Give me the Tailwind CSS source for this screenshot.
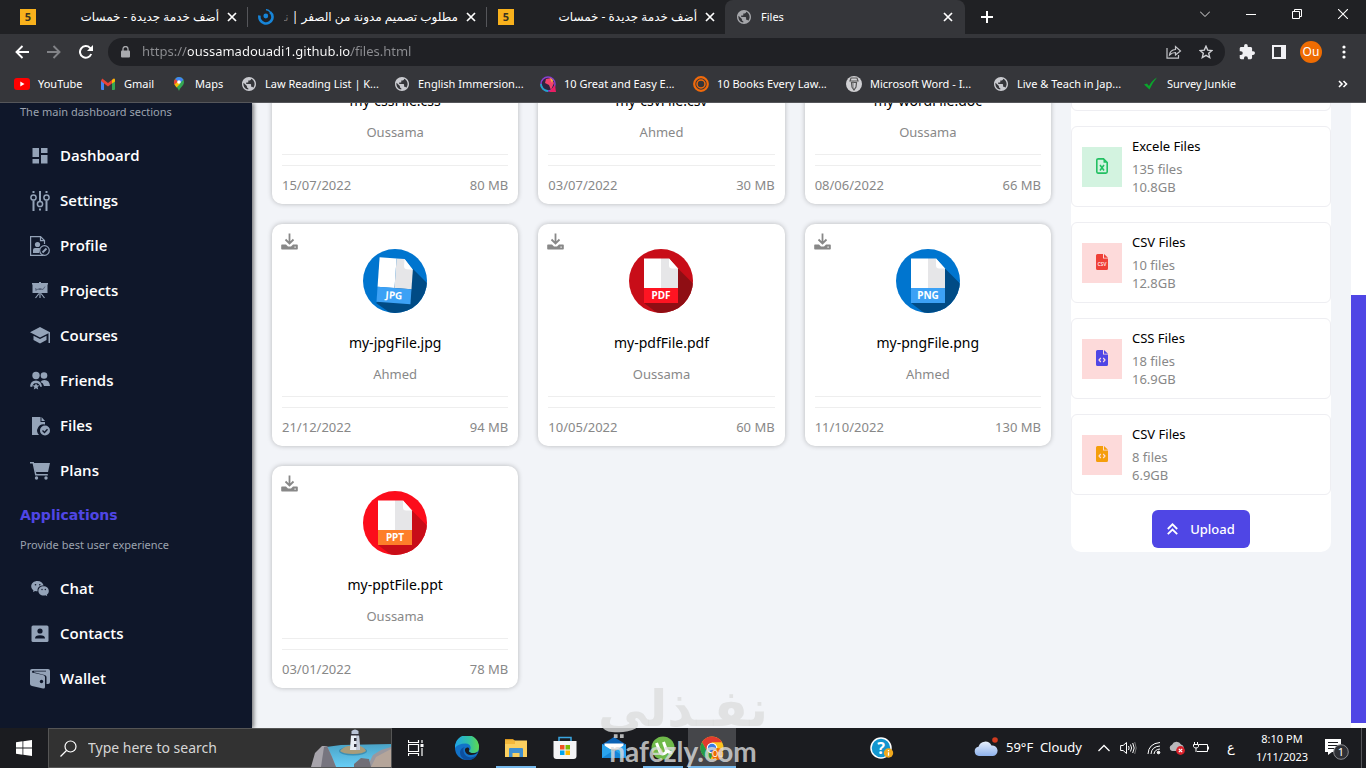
<!DOCTYPE html>
<html lang="en">
<head>
    <meta charset="UTF-8">
    <meta name="viewport" content="width=device-width, initial-scale=1.0">
    <title>Files</title>
    <script src="https://cdn.jsdelivr.net/npm/@tailwindcss/browser@4"></script>
</head>
<body class="h-screen overflow-hidden flex flex-col font-['Noto_Sans','DejaVu_Sans',sans-serif] bg-[#f2f4f8]">
    <!-- Shared icons -->
    <svg class="hidden">
        <symbol id="globe" viewBox="2 2 20 20"><path fill="currentColor" d="M12 2C6.48 2 2 6.48 2 12s4.48 10 10 10 10-4.48 10-10S17.52 2 12 2zm-1 17.93c-3.95-.49-7-3.85-7-7.93 0-.62.08-1.21.21-1.79L9 15v1c0 1.1.9 2 2 2v1.93zm6.9-2.54c-.26-.81-1-1.39-1.9-1.39h-1v-3c0-.55-.45-1-1-1H8v-2h2c.55 0 1-.45 1-1V7h2c1.1 0 2-.9 2-2v-.41c2.93 1.19 5 4.06 5 7.41 0 2.08-.8 3.97-2.1 5.39z"/></symbol>
        <symbol id="close" viewBox="0 0 10 10"><path d="M1 1l8 8M9 1L1 9" fill="none" stroke="currentColor" stroke-width="1.7"/></symbol>
        <symbol id="download" viewBox="0 0 17 17"><path d="M8.500 0.500v9M4.500 6.500l4 4 4-4" fill="none" stroke="currentColor" stroke-width="1.8"/><path fill="currentColor" fill-rule="evenodd" d="M1 11.500h4l2 2h3l2-2h4q.8 0 .8.800v3.400q0 .8-.8.800H1q-.8 0-.8-.800v-3.400q0-.8.8-.800zM13.500 13.500v1.200h1.200v-1.200z"/></symbol>
        <symbol id="page" viewBox="0 0 64 64">
            <path fill="#fff" d="M15 9.500h17V39H15z"/>
            <path fill="#e6e6e8" d="M32 9.500h8l9 10V39H32z"/>
            <path fill="#fff" d="M40 9.500l9 10h-6q-3 0-3-3z"/>
        </symbol>
        <symbol id="code-file" viewBox="0 0 12 16"><path fill="currentColor" d="M1.500 0H7v4.500h5v10q0 1.500-1.500 1.500h-9Q0 16 0 14.500v-13Q0 0 1.500 0zM8 0l4 3.700H8z"/><path d="M4.800 8L3 10l1.800 2M7.200 8L9 10l-1.800 2" fill="none" stroke="#fddcdc" stroke-width="1.200"/></symbol>
    </svg>

    <!-- Browser tabs -->
    <header class="shrink-0 bg-[#202124] text-white text-xs">
        <div class="flex h-[34px] pl-2">
            <div class="flex w-[240px] shrink-0 items-center pl-3">
                <span class="flex h-4 w-4 items-center justify-center bg-[#f8b11c] text-[11px] font-bold text-[#3a3320]">5</span>
                <span dir="rtl" class="flex-1 pr-2 text-right whitespace-nowrap overflow-hidden ml-3">أضف خدمة جديدة - خمسات</span>
                <button aria-label="Close tab" class="mr-2.5"><svg class="h-2.5 w-2.5"><use href="#close"/></svg></button>
                <span class="h-5 w-px bg-[#55565a]"></span>
            </div>
            <div class="flex w-[239px] shrink-0 items-center pl-2.5">
                <svg class="h-4 w-4" viewBox="0 0 16 16"><path d="M1.500 6.500A6.600 6.600 0 0 0 14.200 10 6.600 6.600 0 0 0 12 3" fill="none" stroke="#1785d8" stroke-width="2.600"/><path d="M8 .8A4 4 0 0 1 12 3" fill="none" stroke="#1785d8" stroke-width="1.500"/><circle cx="7.800" cy="7" r="2.400" fill="#1785d8"/></svg>
                <span dir="rtl" class="flex-1 pr-2 text-right whitespace-nowrap overflow-hidden ml-2.5">مطلوب تصميم مدونة من الصفر | <span class="text-[#6b6c70]">نـ</span></span>
                <button aria-label="Close tab" class="mr-2.5"><svg class="h-2.5 w-2.5"><use href="#close"/></svg></button>
                <span class="h-5 w-px bg-[#55565a]"></span>
            </div>
            <div class="flex w-[238px] shrink-0 items-center pl-[11px]">
                <span class="flex h-4 w-4 items-center justify-center bg-[#f8b11c] text-[11px] font-bold text-[#3a3320]">5</span>
                <span dir="rtl" class="flex-1 pr-2 text-right whitespace-nowrap overflow-hidden ml-3">أضف خدمة جديدة - خمسات</span>
                <button aria-label="Close tab" class="mr-2.5"><svg class="h-2.5 w-2.5"><use href="#close"/></svg></button>
            </div>
            <div class="flex w-[240px] shrink-0 items-center rounded-t-lg bg-[#35363a] px-3">
                <svg class="h-3.5 w-3.5 text-[#a5a6aa]"><use href="#globe"/></svg>
                <span class="ml-2.5 flex-1 text-[11px]">Files</span>
                <button aria-label="Close tab"><svg class="h-2.5 w-2.5"><use href="#close"/></svg></button>
            </div>
            <button aria-label="New tab" class="ml-4"><svg class="h-3 w-3" viewBox="0 0 12 12"><path d="M6 0v12M0 6h12" stroke="#fff" stroke-width="2"/></svg></button>
            <div class="ml-auto flex h-7">
                <button aria-label="Search tabs" class="flex w-[46px] items-center justify-center"><svg class="h-1.5 w-2.5" viewBox="0 0 10 6"><path d="M0 .5l5 5 5-5" fill="none" stroke="#ddd"/></svg></button>
                <button aria-label="Minimize" class="flex w-[46px] items-center justify-center"><span class="h-px w-2.5 bg-white"></span></button>
                <button aria-label="Restore" class="flex w-[46px] items-center justify-center"><svg class="h-2.5 w-2.5" viewBox="0 0 10 10"><path d="M.5 2.500h7v7h-7zM2.500 2V.5h7v7H8" fill="none" stroke="#fff"/></svg></button>
                <button aria-label="Close window" class="flex w-[46px] items-center justify-center"><svg class="h-2.5 w-2.5" viewBox="0 0 10 10"><path d="M0 0l10 10M10 0L0 10" stroke="#fff" stroke-width="1.100"/></svg></button>
            </div>
        </div>

        <!-- Toolbar -->
        <div class="flex h-9 items-center bg-[#35363a] pl-[15px] pr-5">
            <button aria-label="Back"><svg class="h-3.5 w-3.5" viewBox="0 0 14 14"><path d="M14 7H1.500M7.500 1L1.500 7l6 6" fill="none" stroke="#fff" stroke-width="1.900"/></svg></button>
            <button aria-label="Forward" class="ml-[18px]"><svg class="h-3.5 w-3.5" viewBox="0 0 14 14"><path d="M0 7h12.500M6.500 1l6 6-6 6" fill="none" stroke="#828387" stroke-width="1.900"/></svg></button>
            <button aria-label="Reload" class="ml-[18px]"><svg class="h-3.5 w-3.5" viewBox="0 0 14 14"><path d="M12.200 9A5.800 5.800 0 1 1 11 2.900L12.500 4.500" fill="none" stroke="#fff" stroke-width="2"/><path fill="#fff" d="M14 0v6H8z"/></svg></button>
            <div class="ml-[15px] flex h-7 flex-1 items-center rounded-full bg-[#202125] pl-[13px] pr-3">
                <svg class="h-3 w-[9px]" viewBox="0 0 9 12"><path d="M2 5V3a2.500 2.500 0 0 1 5 0v2" fill="none" stroke="#a9aaae" stroke-width="1.300"/><rect y="4.500" width="9" height="7" rx="1" fill="#a9aaae"/></svg>
                <input aria-label="Address" type="text" value="https://oussamadouadi1.github.io/files.html" class="ml-3 flex-1 bg-[linear-gradient(to_right,#8d8e92_46px,#fff_46px,#fff_209px,#8d8e92_209px)] bg-clip-text text-[13px] text-transparent outline-none">
                <button aria-label="Share"><svg class="h-3.5 w-4" viewBox="0 0 16 14"><path d="M1 3v10.200h11.500V10M3.500 10q.5-5 6-5.500V1.500L14.500 6 9.500 10V7.500Q6 7.500 3.500 10z" fill="none" stroke="#c4c5c9" stroke-width="1.200"/></svg></button>
                <button aria-label="Bookmark this page" class="ml-[17px]"><svg class="h-3.5 w-3.5" viewBox="0 0 14 14"><path d="M7 1.200l1.700 3.900 4.200.400-3.200 2.800 1 4.200L7 10.300l-3.700 2.200 1-4.200L1.100 5.500l4.200-.400z" fill="none" stroke="#d0d1d5" stroke-width="1.400"/></svg></button>
            </div>
            <button aria-label="Extensions" class="ml-3.5"><svg class="h-4 w-4" viewBox="1 1 22 22"><path fill="#f1f1f4" d="M20.500 11H19V7c0-1.100-.9-2-2-2h-4V3.500a2.500 2.500 0 0 0-5 0V5H4c-1.100 0-2 .9-2 2v3.800h1.500a2.700 2.700 0 0 1 0 5.400H2V20c0 1.100.9 2 2 2h3.800v-1.500a2.700 2.700 0 0 1 5.400 0V22H17c1.100 0 2-.9 2-2v-4h1.500a2.500 2.500 0 0 0 0-5z"/></svg></button>
            <button aria-label="Side panel" class="ml-[17px]"><svg class="h-3.5 w-3.5" viewBox="0 0 14 14"><path d="M1 1h12v12H1z" fill="none" stroke="#f1f1f4" stroke-width="2"/><path d="M9 0h5v14H9z" fill="#f1f1f4"/></svg></button>
            <button class="ml-3.5 h-[22px] w-[22px] rounded-full bg-[#ee6c02]">Ou</button>
            <button aria-label="Menu" class="ml-5"><svg class="h-3.5 w-1" viewBox="0 0 4 14"><g fill="#fff"><circle cx="2" cy="2" r="1.600"/><circle cx="2" cy="7" r="1.600"/><circle cx="2" cy="12" r="1.600"/></g></svg></button>
        </div>

        <!-- Bookmarks -->
        <nav class="flex h-[33px] items-center border-b border-[#55565a] bg-[#35363a] pb-1 pl-3.5 text-[11px] whitespace-nowrap">
            <a href="#" class="flex w-[86px] shrink-0 items-center gap-2">
                <svg class="h-4 w-4" viewBox="0 0 16 16"><rect y="2" width="16" height="12" rx="3" fill="#f00"/><path fill="#fff" d="M6.300 5.500v5l4.200-2.500z"/></svg>YouTube</a>
            <a href="#" class="flex w-[71px] shrink-0 items-center gap-2">
                <svg class="h-4 w-4" viewBox="0 0 16 16"><path fill="#4285f4" d="M1 4.500l3 2V14H2q-1 0-1-1z"/><path fill="#34a853" d="M15 4.500l-3 2V14h2q1 0 1-1z"/><path fill="#ea4335" d="M2.200 2.500L8 7l5.800-4.500L15 5 8 10.500 1 5z"/><path fill="#fbbc04" d="M12 4l2-1.600q1-.2 1 1.600v1.500l-3 2z"/></svg>Gmail</a>
            <a href="#" class="flex w-[70px] shrink-0 items-center gap-2">
                <svg class="h-4 w-4" viewBox="0 0 16 16"><path fill="#34a853" d="M8 1a5 5 0 0 1 5 5c0 4-4 5-5 9-1-4-5-5-5-9a5 5 0 0 1 5-5z"/><path fill="#4285f4" d="M8 1a5 5 0 0 1 4.500 2.800L7 9 4.200 3A5 5 0 0 1 8 1z"/><path fill="#ea4335" d="M4.200 3L7 5.500 3.800 9A5 5 0 0 1 4.200 3z"/><path fill="#fbbc04" d="M3.500 8.500L7 5.500 9 8l-3.500 3.500z"/><circle cx="8" cy="6" r="1.800" fill="#fff"/></svg>Maps</a>
            <a href="#" class="flex w-[153px] shrink-0 items-center gap-2"><svg class="h-3.5 w-4 text-[#c9cacf]"><use href="#globe"/></svg>Law Reading List | K...</a>
            <a href="#" class="flex w-[146px] shrink-0 items-center gap-2"><svg class="h-3.5 w-4 text-[#c9cacf]"><use href="#globe"/></svg>English Immersion...</a>
            <a href="#" class="flex w-[153px] shrink-0 items-center gap-2">
                <svg class="h-4 w-4" viewBox="0 0 16 16"><circle cx="8" cy="8" r="7" fill="#2d2440" stroke="#8a3fd0" stroke-width="1.500"/><path d="M8 15A7 7 0 0 1 1 8" fill="none" stroke="#1ea7c9" stroke-width="1.800"/><path d="M15 9l1 7H9z" fill="#e91e63"/><path d="M6 3l5-1 3 5-3 7-2-5-4-2z" fill="#f0436c"/><path d="M10 2l3 2-1 3z" fill="#f6b73c"/></svg>10 Great and Easy E...</a>
            <a href="#" class="flex w-[153px] shrink-0 items-center gap-2">
                <svg class="h-4 w-4" viewBox="0 0 16 16"><g fill="none" stroke="#f26a0a"><circle cx="8" cy="8" r="6.800" stroke-width="2.200"/><circle cx="8" cy="8" r="4" stroke-width="1.500"/></g></svg>10 Books Every Law...</a>
            <a href="#" class="flex w-[147px] shrink-0 items-center gap-2">
                <svg class="h-4 w-4" viewBox="0 0 16 16"><circle cx="8" cy="8" r="8" fill="#d0d0d3"/><path d="M5 2h6l1 3H4zM5.500 6.500h5L10 11l-2 3-2-3z" fill="none" stroke="#555" stroke-width="1.200"/><path d="M7 5v8" stroke="#777"/></svg>Microsoft Word - I...</a>
            <a href="#" class="flex w-[150px] shrink-0 items-center gap-2"><svg class="h-3.5 w-4 text-[#c9cacf]"><use href="#globe"/></svg>Live &amp; Teach in Jap...</a>
            <a href="#" class="flex items-center gap-2">
                <svg class="h-4 w-4" viewBox="0 0 16 16"><path fill="#0aa52c" d="M1 8.500l3-1 2 2.500Q9 4 14 1.500 10 6 6.500 13.500z"/></svg>Survey Junkie</a>
            <button aria-label="More bookmarks" class="ml-auto mr-[18px]"><svg class="h-2 w-2.5" viewBox="0 0 10 8"><path d="M1 1l3 3-3 3M5.500 1l3 3-3 3" fill="none" stroke="#fff" stroke-width="1.600"/></svg></button>
        </nav>
    </header>

    <div class="flex min-h-0 flex-1 overflow-hidden">
        <!-- Sidebar -->
        <aside class="z-10 flex w-[252px] shrink-0 flex-col justify-end bg-[#0f172a] pb-[27px] shadow-[2px_0_4px_rgba(0,0,0,0.5)]">
            <p class="mb-[13px] pl-5 text-[11px] leading-4 text-[#9ca3af]">The main dashboard sections</p>
            <nav class="mb-3 font-['Open_Sans',sans-serif] text-[15px] font-semibold text-white">
                <a href="#" class="flex h-[45px] items-center gap-2.5 pl-[30px]">
                    <svg class="h-5 w-5 text-[#94a3b8]" viewBox="0 0 20 20" fill="currentColor"><path d="M2.500 2h6.500v9H2.500zM11 2h6.500v5H11zM2.500 13h6.500v4.500H2.500zM11 9h6.500v8.500H11z"/></svg>Dashboard</a>
                <a href="#" class="flex h-[45px] items-center gap-2.5 pl-[30px]">
                    <svg class="h-5 w-5 text-[#94a3b8]" viewBox="0 0 20 20" fill="none" stroke="currentColor" stroke-width="1.500"><circle cx="3.500" cy="6.500" r="2.600"/><circle cx="10" cy="13" r="2.600"/><circle cx="16.500" cy="6.500" r="2.600"/><path stroke-width="2" d="M3.500 9.500V20M16.500 9.500V20M10 0v10M3.500 0v2M16.500 0v2M10 17.500v2"/></svg>Settings</a>
                <a href="#" class="flex h-[45px] items-center gap-2.5 pl-[30px]">
                    <svg class="h-5 w-5 text-[#94a3b8]" viewBox="0 0 20 20" fill="none" stroke="currentColor" stroke-width="1.200"><path d="M14.500 8V4.500L10.500.6H.6v18.800h13"/><path d="M10.500.6v4h4"/><circle cx="7.500" cy="8.500" r="2.600" fill="currentColor" stroke="none"/><path d="M3 17v-3q0-2 2-2h5l-1 5z" fill="currentColor" stroke="none"/><circle cx="14.500" cy="14.500" r="4.800"/><path d="M12.500 16.500l4-4" stroke-width="2"/></svg>Profile</a>
                <a href="#" class="flex h-[45px] items-center gap-2.5 pl-[30px]">
                    <svg class="h-5 w-5 text-[#94a3b8]" viewBox="0 0 20 20"><path fill="currentColor" d="M2 2h7V1h2v1h7v1.500h-.500V12H2.500V3.500H2z"/><path d="M5 9h2M8.500 8.500h3M5 7.500l2 1 3-1 3 1 2-3" fill="none" stroke="#46536b" stroke-width=".8"/><path d="M10 12v5M9 12.500l-3.500 4.500M11 12.500l3.500 4.500" stroke="currentColor" stroke-width="1.200"/></svg>Projects</a>
                <a href="#" class="flex h-[45px] items-center gap-2.5 pl-[30px]">
                    <svg class="h-5 w-5 text-[#94a3b8]" viewBox="0 0 20 20" fill="currentColor"><path d="M10 1l10 5.200V17h-1.500V7.200L10 11.500 0 6.200z"/><path d="M3.500 9.800l6.500 3.300 6.500-3.300V14L10 17.500 3.500 14z"/></svg>Courses</a>
                <a href="#" class="flex h-[45px] items-center gap-2.5 pl-[30px]">
                    <svg class="h-5 w-5 text-[#94a3b8]" viewBox="0 0 20 20" fill="currentColor"><circle cx="6" cy="4.500" r="3.700"/><circle cx="14" cy="4.500" r="3.300"/><path d="M10.500 11q1-2 4-2 5 0 5.500 6h-6q-.5-3-3.500-4zM0 15.500q.5-6 6-6 5 0 6 6l-1.500.5q-1.500-4-4.500-4T2.200 16z"/><path d="M6 12l1 2.200 2.500.2-1.900 1.700.600 2.400L6 17.200l-2.200 1.300.600-2.400-1.900-1.700 2.500-.2z"/></svg>Friends</a>
                <a href="#" class="flex h-[45px] items-center gap-2.5 pl-[30px]">
                    <svg class="h-5 w-5 text-[#94a3b8]" viewBox="0 0 20 20"><path fill="currentColor" d="M2 1h8.500v5H15v2.500a6.300 6.300 0 0 0-6 10.500H2zM11.500 1L15 5h-3.500z"/><circle cx="15" cy="14.500" r="5" fill="currentColor"/><path d="M12.500 14.500l2 2 3-3.200" fill="none" stroke="#0f172a" stroke-width="1.400"/></svg>Files</a>
                <a href="#" class="flex h-[45px] items-center gap-2.5 pl-[30px]">
                    <svg class="h-5 w-5 text-[#94a3b8]" viewBox="0 0 20 20"><path fill="currentColor" d="M3.200 2H20l-2 9H5.500z"/><path d="M0 1.700h3.200l2.600 12h12" fill="none" stroke="currentColor" stroke-width="1.500"/><circle cx="6.500" cy="17" r="1.700" fill="currentColor"/><circle cx="16" cy="17" r="1.700" fill="currentColor"/></svg>Plans</a>
            </nav>
            <h2 class="mb-3 pl-5 font-['DejaVu_Sans',sans-serif] text-sm font-bold leading-5 text-[#4f46e5]">Applications</h2>
            <p class="mb-[13px] pl-5 text-[11px] leading-4 text-[#9ca3af]">Provide best user experience</p>
            <nav class="font-['Open_Sans',sans-serif] text-[15px] font-semibold text-white">
                <a href="#" class="flex h-[45px] items-center gap-2.5 pl-[30px]">
                    <svg class="h-5 w-5 text-[#94a3b8]" viewBox="0 0 20 20"><path fill="currentColor" d="M7.500 2C4 2 1.200 4.200 1.200 7.300c0 1.700.9 3 2.200 4L3 13l2.200-1q1.300.3 2.400.2C7 8.500 10 6.300 13.600 6.500 13 3.800 10.500 2 7.500 2z"/><path fill="currentColor" d="M13.600 7.300c-3 0-5.200 2-5.200 4.600s2.200 4.600 5.200 4.600q1 0 1.800-.3l1.900 1-.5-1.500c1.200-.8 2-2.200 2-3.800 0-2.600-2.300-4.600-5.200-4.600z"/><g fill="#0f172a"><circle cx="5.500" cy="5.700" r=".8"/><circle cx="9.800" cy="5.700" r=".8"/><circle cx="12" cy="10.500" r=".7"/><circle cx="15.300" cy="10.500" r=".7"/></g></svg>Chat</a>
                <a href="#" class="flex h-[45px] items-center gap-2.5 pl-[30px]">
                    <svg class="h-5 w-5 text-[#94a3b8]" viewBox="0 0 20 20"><rect x="1.500" y="1.500" width="17" height="16.500" rx="1.500" fill="currentColor"/><circle cx="10" cy="7" r="2.600" fill="#0f172a"/><path fill="#0f172a" d="M5 14.500q0-3.300 5-3.300t5 3.300z"/></svg>Contacts</a>
                <a href="#" class="flex h-[45px] items-center gap-2.5 pl-[30px]">
                    <svg class="h-5 w-5 text-[#94a3b8]" viewBox="0 0 20 20"><path fill="currentColor" d="M2 0h16q2 0 2 2v11q0 2-2 2h-1.500V8q0-1.500-2-2L4 3.200V2.500h12V1.700H3Q1.700 2 2 3.500L13 6q2 .5 2 2v10q0 2-2 1.500L2 17q-2-.5-2-2V2q0-2 2-2z"/><circle cx="11.500" cy="12.500" r="1.700" fill="#0f172a"/></svg>Wallet</a>
            </nav>
        </aside>

        <!-- Files -->
        <main class="flex min-w-0 flex-1 flex-col justify-end bg-[#f2f4f8] px-5 pb-10">
            <div class="flex items-start gap-5">
                <section class="grid flex-1 grid-cols-3 gap-5 text-center text-[13px] leading-5 text-[#888]">
                    <article class="rounded-[10px] bg-white px-2.5 pt-[25px] pb-[9px] shadow-[0_0_5px_rgba(0,0,0,0.25)]">
                        <div class="h-16"></div>
                        <h3 class="mt-5 text-sm leading-5 text-black">my-cssFile.css</h3>
                        <p class="mt-[11px]">Oussama</p>
                        <div class="mt-3 h-3 border-y border-[#eee]"></div>
                        <div class="mt-[9px] flex justify-between"><span>15/07/2022</span><span>80 MB</span></div>
                    </article>
                    <article class="rounded-[10px] bg-white px-2.5 pt-[25px] pb-[9px] shadow-[0_0_5px_rgba(0,0,0,0.25)]">
                        <div class="h-16"></div>
                        <h3 class="mt-5 text-sm leading-5 text-black">my-csvFile.csv</h3>
                        <p class="mt-[11px]">Ahmed</p>
                        <div class="mt-3 h-3 border-y border-[#eee]"></div>
                        <div class="mt-[9px] flex justify-between"><span>03/07/2022</span><span>30 MB</span></div>
                    </article>
                    <article class="rounded-[10px] bg-white px-2.5 pt-[25px] pb-[9px] shadow-[0_0_5px_rgba(0,0,0,0.25)]">
                        <div class="h-16"></div>
                        <h3 class="mt-5 text-sm leading-5 text-black">my-wordFile.doc</h3>
                        <p class="mt-[11px]">Oussama</p>
                        <div class="mt-3 h-3 border-y border-[#eee]"></div>
                        <div class="mt-[9px] flex justify-between"><span>08/06/2022</span><span>66 MB</span></div>
                    </article>

                    <article class="relative rounded-[10px] bg-white px-2.5 pt-[25px] pb-[9px] shadow-[0_0_5px_rgba(0,0,0,0.25)]">
                        <button aria-label="Download" class="absolute left-[9px] top-[9px]"><svg class="h-[17px] w-[17px]"><use href="#download"/></svg></button>
                        <svg class="mx-auto h-16 w-16 rounded-full" viewBox="0 0 64 64">
                            <path fill="#0075cf" d="M0 0h64v64H0z"/><path fill="#004b85" d="M50 20l30 30-30 30-37-26z"/>
                            <g transform="rotate(4 32 32)"><use href="#page" width="64" height="64"/><path fill="#3ca1f5" d="M15 39h34v15H15z"/><text x="32" y="50" text-anchor="middle" font-size="10" font-weight="700" fill="#fff">JPG</text></g>
                        </svg>
                        <h3 class="mt-5 text-sm leading-5 text-black">my-jpgFile.jpg</h3>
                        <p class="mt-[11px]">Ahmed</p>
                        <div class="mt-3 h-3 border-y border-[#eee]"></div>
                        <div class="mt-[9px] flex justify-between"><span>21/12/2022</span><span>94 MB</span></div>
                    </article>
                    <article class="relative rounded-[10px] bg-white px-2.5 pt-[25px] pb-[9px] shadow-[0_0_5px_rgba(0,0,0,0.25)]">
                        <button aria-label="Download" class="absolute left-[9px] top-[9px]"><svg class="h-[17px] w-[17px]"><use href="#download"/></svg></button>
                        <svg class="mx-auto h-16 w-16 rounded-full" viewBox="0 0 64 64">
                            <path fill="#c80d18" d="M0 0h64v64H0z"/><path fill="#8f0e14" d="M49 19.500l31 31-30 30-35-26.500z"/>
                            <use href="#page" width="64" height="64"/><path fill="#ff1422" d="M15 39h34v15H15z"/><text x="32" y="50" text-anchor="middle" font-size="10" font-weight="700" fill="#fff">PDF</text>
                        </svg>
                        <h3 class="mt-5 text-sm leading-5 text-black">my-pdfFile.pdf</h3>
                        <p class="mt-[11px]">Oussama</p>
                        <div class="mt-3 h-3 border-y border-[#eee]"></div>
                        <div class="mt-[9px] flex justify-between"><span>10/05/2022</span><span>60 MB</span></div>
                    </article>
                    <article class="relative rounded-[10px] bg-white px-2.5 pt-[25px] pb-[9px] shadow-[0_0_5px_rgba(0,0,0,0.25)]">
                        <button aria-label="Download" class="absolute left-[9px] top-[9px]"><svg class="h-[17px] w-[17px]"><use href="#download"/></svg></button>
                        <svg class="mx-auto h-16 w-16 rounded-full" viewBox="0 0 64 64">
                            <path fill="#0075cf" d="M0 0h64v64H0z"/><path fill="#004b85" d="M49 19.500l31 31-30 30-35-26.500z"/>
                            <use href="#page" width="64" height="64"/><path fill="#3ca1f5" d="M15 39h34v15H15z"/><text x="32" y="50" text-anchor="middle" font-size="10" font-weight="700" fill="#fff">PNG</text>
                        </svg>
                        <h3 class="mt-5 text-sm leading-5 text-black">my-pngFile.png</h3>
                        <p class="mt-[11px]">Ahmed</p>
                        <div class="mt-3 h-3 border-y border-[#eee]"></div>
                        <div class="mt-[9px] flex justify-between"><span>11/10/2022</span><span>130 MB</span></div>
                    </article>

                    <article class="relative rounded-[10px] bg-white px-2.5 pt-[25px] pb-[9px] shadow-[0_0_5px_rgba(0,0,0,0.25)]">
                        <button aria-label="Download" class="absolute left-[9px] top-[9px]"><svg class="h-[17px] w-[17px]"><use href="#download"/></svg></button>
                        <svg class="mx-auto h-16 w-16 rounded-full" viewBox="0 0 64 64">
                            <path fill="#fc0d1b" d="M0 0h64v64H0z"/><path fill="#c80d18" d="M49 19.500l31 31-30 30-35-26.500z"/>
                            <use href="#page" width="64" height="64"/><path fill="#fd7e2a" d="M15 39h34v15H15z"/><text x="32" y="50" text-anchor="middle" font-size="10" font-weight="700" fill="#fff">PPT</text>
                        </svg>
                        <h3 class="mt-5 text-sm leading-5 text-black">my-pptFile.ppt</h3>
                        <p class="mt-[11px]">Oussama</p>
                        <div class="mt-3 h-3 border-y border-[#eee]"></div>
                        <div class="mt-[9px] flex justify-between"><span>03/01/2022</span><span>78 MB</span></div>
                    </article>
                </section>

                <!-- File statistics -->
                <section class="flex w-[260px] shrink-0 flex-col gap-[15px] rounded-[10px] bg-white pt-12 pb-1 text-[13px] leading-[18px] text-[#888]">
                    <div class="h-[81px] rounded-md border border-[#eeeef2]"></div>
                    <div class="flex items-center gap-2.5 rounded-md border border-[#eeeef2] px-2.5 py-2.5">
                        <span class="flex h-10 w-10 items-center justify-center bg-[#d3f3e0] pb-0.5 text-[#22c062]">
                            <svg class="h-4 w-3" viewBox="0 0 12 16"><path d="M1.500.9h6L11.200 4.500v9.300q0 1.300-1.300 1.300H2q-1.200 0-1.200-1.300V2Q.8.900 2 .9z" fill="none" stroke="currentColor" stroke-width="1.600"/><path d="M7.500 1v3.800h3.700z" fill="currentColor"/><path d="M4 7l4 5.500M8 7l-4 5.500" stroke="currentColor" stroke-width="1.600"/></svg>
                        </span>
                        <div><h4 class="mb-[5px] text-black">Excele Files</h4><p>135 files</p><p>10.8GB</p></div>
                    </div>
                    <div class="flex items-center gap-2.5 rounded-md border border-[#eeeef2] px-2.5 py-2.5">
                        <span class="flex h-10 w-10 items-center justify-center bg-[#fddada] pb-0.5 text-[#ef4037]">
                            <svg class="h-4 w-3" viewBox="0 0 12 16"><path fill="currentColor" d="M1.500 0H7v4.500h5v10q0 1.500-1.500 1.500h-9Q0 16 0 14.500v-13Q0 0 1.500 0zM8 0l4 3.700H8z"/><text x="6" y="12" text-anchor="middle" font-size="5" font-weight="700" fill="#fddada">CSV</text></svg>
                        </span>
                        <div><h4 class="mb-[5px] text-black">CSV Files</h4><p>10 files</p><p>12.8GB</p></div>
                    </div>
                    <div class="flex items-center gap-2.5 rounded-md border border-[#eeeef2] px-2.5 py-2.5">
                        <span class="flex h-10 w-10 items-center justify-center bg-[#fddada] pb-0.5 text-[#4f46e5]"><svg class="h-4 w-3"><use href="#code-file"/></svg></span>
                        <div><h4 class="mb-[5px] text-black">CSS Files</h4><p>18 files</p><p>16.9GB</p></div>
                    </div>
                    <div class="flex items-center gap-2.5 rounded-md border border-[#eeeef2] px-2.5 py-2.5">
                        <span class="flex h-10 w-10 items-center justify-center bg-[#fddada] pb-0.5 text-[#f59e0b]"><svg class="h-4 w-3"><use href="#code-file"/></svg></span>
                        <div><h4 class="mb-[5px] text-black">CSV Files</h4><p>8 files</p><p>6.9GB</p></div>
                    </div>
                    <button class="mx-auto flex h-[38px] items-center gap-3 rounded-md bg-[#4f46e5] px-[15px] font-medium text-white">
                        <svg class="h-3 w-[11px]" viewBox="0 0 11 12"><path d="M.8 6l4.700-4.700L10.200 6M.8 11.200l4.700-4.700 4.700 4.700" fill="none" stroke="#fff" stroke-width="1.800"/></svg>Upload</button>
                </section>
            </div>
        </main>

        <!-- Scrollbar -->
        <div class="flex w-[15px] shrink-0 flex-col justify-end bg-white pb-[5px]">
            <div class="h-[69%] bg-[#4f46e5]"></div>
        </div>
    </div>

    <!-- Taskbar -->
    <footer class="relative flex h-10 shrink-0 bg-[#1b1c20] text-white">
        <button aria-label="Start" class="flex w-12 items-center justify-center"><svg class="h-4 w-4" viewBox="0 0 16 16"><path fill="#fff" d="M0 2.200L6.500 1.300v6.300H0zM7.300 1.200L16 0v7.600H7.300zM0 8.400h6.500v6.300L0 13.800zM7.300 8.400H16V16l-8.700-1.200z"/></svg></button>
        <div class="flex w-[344px] items-center border border-[#555] bg-[#323232] pl-[11px]">
            <svg class="h-[17px] w-[17px] shrink-0" viewBox="0 0 17 17"><circle cx="10.500" cy="6.500" r="5.500" fill="none" stroke="#fff" stroke-width="1.200"/><path d="M6.500 10.500L.5 16.500" stroke="#fff" stroke-width="1.200"/></svg>
            <input aria-label="Search" type="text" placeholder="Type here to search" class="ml-[11px] min-w-0 flex-1 text-sm outline-none placeholder:text-[#d6d6d6]">
            <svg class="h-[38px] w-20 shrink-0" viewBox="0 0 80 38"><defs><linearGradient id="sea" x2="0" y2="1"><stop stop-color="#4aa3c6"/><stop offset="1" stop-color="#67cdf5"/></linearGradient></defs><path fill="url(#sea)" d="M15 18l15-2 50-1v23H18z"/><ellipse cx="42" cy="22" rx="14" ry="4.500" fill="#3b8fb5"/><path fill="#a89c7a" d="M29 22q3-4 8-5h12q5 2 6 5-3 3-13 3t-13-3z"/><path fill="#e9eef5" d="M40 6h8l1 15H39z"/><path fill="#c3cbd9" d="M45 6h3l1 15h-4z"/><path fill="#b9c4d6" d="M40.500 2q3.500-3 7 0v3h-7z"/><path fill="#32323c" d="M39 5h10v1.500H39zM43 9h2.500v3H43zM43 15h2.500v3H43z"/><path fill="#a7a4ab" d="M0 38l4-14 7-7h5l5 11 4 10z"/><path fill="#77757f" d="M10 38l3-20 3-1 5 11 4 10z"/><path fill="#9a989f" d="M56 38l6-12 8-5 10-3v20z"/><path fill="#b5a59a" d="M60 38l5-10 15-8v18z"/><path fill="#716f77" d="M43 38v-3l7-6 8 1 2 8z"/></svg>
        </div>
        <button aria-label="Task view" class="flex w-12 items-center justify-center"><svg class="h-4 w-4" viewBox="0 0 16 16" fill="none" stroke="#fff"><path d="M.5 0v2.500h10V0M.5 16v-2.500h10V16M.5 4.500h10v7H.5zM14 0v3M14 8v8" stroke-width="1.200"/><path d="M14 4v3" stroke-width="3"/></svg></button>
        <div class="ml-[3px] flex gap-px">
            <button aria-label="Edge" class="flex w-12 items-center justify-center">
                <svg class="h-6 w-6" viewBox="0 0 24 24"><defs><linearGradient id="edge-a" x1="0" x2="1"><stop stop-color="#1fa4e8"/><stop offset=".6" stop-color="#34c3a0"/><stop offset="1" stop-color="#5fd94e"/></linearGradient></defs><circle cx="12" cy="12" r="12" fill="#1272c8"/><path fill="url(#edge-a)" d="M0 11A12 12 0 0 1 24 11q0 6-6 6-4 0-4-2 2-1 1.500-4Q15 7.500 10.500 7.500 3 7.500 0 12z"/><path fill="#0c4f9e" d="M8.500 12.500q-1 6 5 8.500 4 1.500 8.500-2-4 6-11 5-6-2-6-8 .5-4 5-5-1 .5-1.500 1.500z"/><path fill="#1b1c20" d="M10 13q1-2 3-1.500 2 1 .8 3.500 1 2.500 6 2 2-.3 3.500-1-3 3-7.500 3T10 15z"/></svg></button>
            <button aria-label="File Explorer" class="relative flex w-12 items-center justify-center">
                <svg class="h-5 w-6" viewBox="0 0 24 20"><path fill="#d9951c" d="M1 1h8l2 2H1z"/><path fill="#fbcf5f" d="M1 2.500h22V19H1z"/><path fill="#f3b73a" d="M1 3h10v3H1z"/><path fill="#3f8fd0" d="M5 19v-8q0-1 1-1h12q1 0 1 1v8h-3.500v-4h-7v4z"/></svg>
                <span class="absolute bottom-0 h-0.5 w-10 bg-[#76b9ed]"></span></button>
            <button aria-label="Store" class="flex w-12 items-center justify-center">
                <svg class="h-6 w-6" viewBox="0 0 24 24"><path d="M6 6V1.500h12V6" fill="none" stroke="#3aa5e0" stroke-width="1.500"/><path fill="#f4f4f6" d="M.5 5h23v15q0 3-3 3h-17q-3 0-3-3z"/><path fill="#f25022" d="M7 9h4.500v4.500H7z"/><path fill="#7fba00" d="M12.500 9H17v4.500h-4.500z"/><path fill="#00a4ef" d="M7 14.500h4.500V19H7z"/><path fill="#ffb900" d="M12.500 14.500H17V19h-4.500z"/></svg></button>
            <button aria-label="Mail" class="flex w-12 items-center justify-center">
                <svg class="h-6 w-6" viewBox="0 0 24 24"><path fill="#0a62b5" d="M0 8.500l12-7.500 12 7.500V12H0z"/><path fill="#fff" d="M2.500 7.500h19v6h-19z"/><path fill="#2aa4ee" d="M0 8l12 7.500L24 8v14H0z"/><path fill="#1687d8" d="M0 22l12-8 12 8z"/></svg></button>
            <button aria-label="uTorrent" class="relative flex w-12 items-center justify-center">
                <svg class="h-6 w-6" viewBox="0 0 24 24"><circle cx="12" cy="12" r="11.500" fill="#6fb94a"/><path d="M5.500 7l3.500 9q1.500 3 4.500 1.500T15 13L12.500 6M15 13q2 4 6 3.500" fill="none" stroke="#fff" stroke-width="3"/></svg>
                <span class="absolute bottom-0 h-0.5 w-10 bg-[#76b9ed]"></span></button>
            <button aria-label="Chrome" class="relative flex w-12 items-center justify-center bg-[#45464a]">
                <svg class="h-6 w-6" viewBox="0 0 24 24"><circle cx="12" cy="12" r="11.500" fill="#fcc31e"/><path fill="#e33b2e" d="M2 6.200A11.500 11.500 0 0 1 22 6.300H12L7 15z"/><path fill="#259b48" d="M2 6.200L7 15q2 3 6 2.500L10.500 23.500A11.500 11.500 0 0 1 2 6.200z"/><circle cx="12" cy="12" r="5.300" fill="#fff"/><circle cx="12" cy="12" r="4.200" fill="#3c7de6"/><circle cx="17.500" cy="18" r="6" fill="#ee6c02"/><text x="17.500" y="21" text-anchor="middle" font-size="8" fill="#fff">Ou</text></svg>
                <span class="absolute bottom-0 h-0.5 w-12 bg-[#76b9ed]"></span></button>
        </div>
        <!-- System tray -->
        <div class="ml-auto flex items-center text-[13px]">
            <button aria-label="Help"><svg class="h-6 w-6" viewBox="0 0 24 24"><circle cx="11" cy="12" r="10" fill="#1296cf" stroke="#fff" stroke-width="1.500"/><text x="11" y="18" text-anchor="middle" font-size="16" font-weight="700" fill="#fff">?</text><circle cx="18.500" cy="17" r="4.700" fill="#f0a81c"/><path d="M18.500 14v1.200M18.500 16.200v3.500" stroke="#fff" stroke-width="1.300"/></svg></button>
            <button class="ml-20 flex items-center gap-2">
                <svg class="h-6 w-6" viewBox="0 0 24 24"><defs><linearGradient id="cloud" x2="0" y2="1"><stop stop-color="#e8f0fd"/><stop offset="1" stop-color="#8db1ec"/></linearGradient></defs><path fill="url(#cloud)" d="M5 20a4.700 4.700 0 0 1-.5-9.300 7 7 0 0 1 13-1.200A5.300 5.300 0 0 1 19 20z"/><circle cx="21" cy="4" r="2.800" fill="#d13b1f"/></svg>
                <span>59°F&nbsp;&nbsp;Cloudy</span></button>
            <button aria-label="Show hidden icons" class="ml-4"><svg class="h-2 w-3" viewBox="0 0 12 8"><path d="M.5 7L6 1.500 11.500 7" fill="none" stroke="#fff" stroke-width="1.300"/></svg></button>
            <button aria-label="Volume" class="ml-2.5"><svg class="h-3.5 w-[17px]" viewBox="0 0 17 14" fill="none" stroke="#fff"><path d="M.6 4.500h2.500L6.500 1.500v11L3.100 9.500H.6z"/><path d="M8.500 5q1.200 2 0 4M10.500 3.500q2.200 3.500 0 7M12.700 2q3 5 0 10"/><path d="M14.700 1q3 6 0 12" stroke="#777"/></svg></button>
            <button aria-label="Wi-Fi" class="ml-2.5"><svg class="h-3.5 w-3.5" viewBox="0 0 14 14" fill="none" stroke="#fff"><path d="M1 13Q1.500 2.500 13 1.500M4 13q.5-7.500 9-8M7 13q.5-4.500 6-5"/><circle cx="11.500" cy="11.500" r="1.300" fill="#fff"/></svg></button>
            <button aria-label="OneDrive" class="ml-2"><svg class="h-3.5 w-4" viewBox="0 0 16 14"><path fill="#b8b8bb" d="M3 10a3.300 3.300 0 0 1 0-6.300A5 5 0 0 1 12 3.500 3.500 3.500 0 0 1 13 10z"/><circle cx="11.500" cy="9.500" r="4.400" fill="#d8202a"/><path d="M9.800 7.800l3.400 3.400M13.200 7.800l-3.400 3.400" stroke="#fff" stroke-width="1.200"/></svg></button>
            <button aria-label="Battery" class="ml-2"><svg class="h-3.5 w-4" viewBox="0 0 16 14" fill="none" stroke="#fff"><path d="M6 3.500h8.500v7H4M15.500 5.500v3M1.500 1v2.500M4.500 1v2.500M.5 3.500h5v2q-.5 1.500-2.500 1.500T.5 5.500zM3 7v4"/></svg></button>
            <button class="ml-[18px] w-2">ع</button>
            <button class="ml-5 w-[54px] text-center text-[11px] leading-[18px]">8:10 PM<br>1/11/2023</button>
            <button aria-label="Notifications" class="ml-4"><svg class="h-6 w-6" viewBox="0 0 24 24"><path fill="#fff" d="M0 3h16v13H7l-4 3v-3H0z"/><path d="M3 6.500h10M3 9.500h10M3 12.500h6" stroke="#1b1c20" stroke-width="1.200"/><circle cx="16" cy="16" r="7.300" fill="#2f3035" stroke="#8b8c90"/><text x="16" y="20" text-anchor="middle" font-size="11" fill="#fff">1</text></svg></button>
            <span class="ml-3 mr-1 h-10 w-px bg-[#55565a]"></span>
        </div>
        <!-- Watermark -->
        <div class="pointer-events-none absolute inset-x-0 bottom-0 z-20 flex flex-col items-center font-bold text-[#dcdddd]/80">
            <span dir="rtl" class="font-['DejaVu_Sans',sans-serif] text-[50px] leading-[50px]">نفـذلي</span>
            <span class="font-['Lato',sans-serif] text-[28px] leading-[34px]">nafezly.com</span>
        </div>
    </footer>
</body>
</html>
